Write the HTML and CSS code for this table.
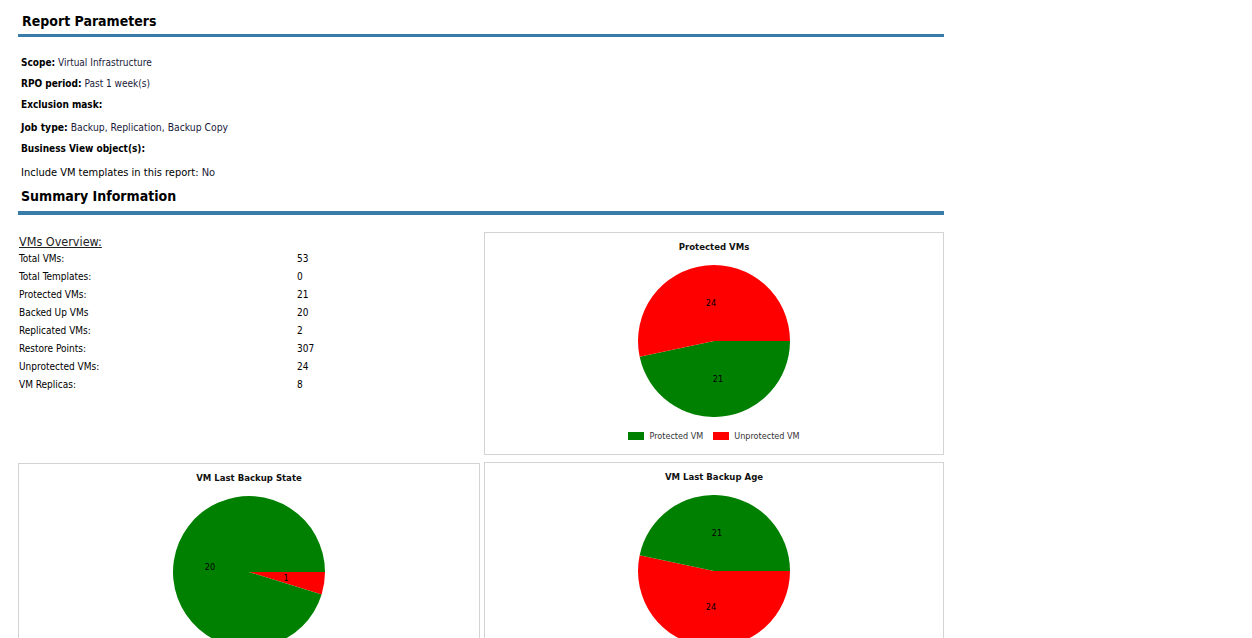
FILE: index.html
```html
<!DOCTYPE html>
<html>
<head>
<meta charset="utf-8">
<link rel="stylesheet" href="styles.css">
</head>
<body>
<div class="report">
  <div class="section-head">Report Parameters</div>
  <div class="params">
    <div class="param"><b>Scope:</b> <span class="val">Virtual Infrastructure</span></div>
    <div class="param"><b>RPO period:</b> <span class="val">Past 1 week(s)</span></div>
    <div class="param"><b>Exclusion mask:</b></div>
    <div class="param job"><b>Job type:</b> <span class="val">Backup, Replication, Backup Copy</span></div>
    <div class="param"><b>Business View object(s):</b></div>
    <div class="param incl">Include VM templates in this report: <span class="val">No</span></div>
  </div>
  <div class="section-head summary">Summary Information</div>

  <div class="grid">
    <div class="overview">
      <div class="ov-title">VMs Overview:</div>
      <div class="ov-rows">
        <span>Total VMs:</span><span>53</span>
        <span>Total Templates:</span><span>0</span>
        <span>Protected VMs:</span><span>21</span>
        <span>Backed Up VMs</span><span>20</span>
        <span>Replicated VMs:</span><span>2</span>
        <span>Restore Points:</span><span>307</span>
        <span>Unprotected VMs:</span><span>24</span>
        <span>VM Replicas:</span><span>8</span>
      </div>
    </div>

    <div class="chart">
      <div class="chart-title">Protected VMs</div>
      <svg class="pie" viewBox="-76 -76 152 152" width="152" height="152">
        <path d="M0,0 L76,0 A76,76 0 0,1 -74.34,15.80 Z" fill="#008000"/>
        <path d="M0,0 L-74.34,15.80 A76,76 0 1,1 76,0 Z" fill="#ff0000"/>
        <text x="-3" y="-38">24</text>
        <text x="4" y="38">21</text>
      </svg>
      <div class="legend">
        <span class="key"><i class="sw green"></i>Protected VM</span>
        <span class="key"><i class="sw red"></i>Unprotected VM</span>
      </div>
    </div>

    <div class="chart low">
      <div class="chart-title">VM Last Backup State</div>
      <svg class="pie" viewBox="-76 -76 152 152" width="152" height="152">
        <path d="M0,0 L76,0 A76,76 0 0,1 72.63,22.40 Z" fill="#ff0000"/>
        <path d="M0,0 L72.63,22.40 A76,76 0 1,1 76,0 Z" fill="#008000"/>
        <text x="-39" y="-5">20</text>
        <text x="37" y="6">1</text>
      </svg>
    </div>

    <div class="chart">
      <div class="chart-title">VM Last Backup Age</div>
      <svg class="pie" viewBox="-76 -76 152 152" width="152" height="152">
        <path d="M0,0 L76,0 A76,76 0 1,1 -74.34,-15.80 Z" fill="#ff0000"/>
        <path d="M0,0 L-74.34,-15.80 A76,76 0 0,1 76,0 Z" fill="#008000"/>
        <text x="3" y="-38">21</text>
        <text x="-3" y="36">24</text>
      </svg>
    </div>
  </div>
</div>
</body>
</html>
```

FILE: styles.css
```css
html, body {
  margin: 0;
  padding: 0;
  background: #ffffff;
}

body {
  font-family: "DejaVu Sans Condensed", "DejaVu Sans", sans-serif;
  color: #000;
  font-size: 11px;
}

.report {
  width: 926px;
  margin-left: 18px;
}

.section-head {
  font-size: 14px;
  font-weight: bold;
  line-height: 18px;
  padding: 12px 0 4px 4px;
  border-bottom: 3px solid #3a7ca8;
}

.section-head.summary {
  padding: 0 0 6px 3px;
  border-bottom-width: 4px;
}

.params {
  padding: 15px 0 4px 3px;
  display: flex;
  flex-direction: column;
}

.param {
  height: 21px;
  line-height: 21px;
  font-size: 10px;
}

.param.job {
  font-size: 10.3px;
  margin-top: 2px;
}

.param.incl {
  font-size: 11px;
  margin-top: 3px;
}

.param .val {
  color: #1a1a3a;
}

.grid {
  display: grid;
  grid-template-columns: 462px 460px;
  column-gap: 4px;
  row-gap: 7px;
  margin-top: 17px;
}

.overview {
  padding-top: 2px;
}

.ov-title {
  font-family: "DejaVu Sans Condensed", "DejaVu Sans", sans-serif;
  font-size: 12.5px;
  text-decoration: underline;
  color: #222;
  line-height: 16px;
  margin-left: 1px;
}

.ov-rows {
  display: grid;
  grid-template-columns: 278px auto;
  grid-auto-rows: 18px;
  line-height: 18px;
  font-size: 10px;
  margin-left: 1px;
}

.chart {
  border: 1px solid #d3d3d3;
  height: 221px;
  display: flex;
  flex-direction: column;
  align-items: center;
}

.chart.low {
  margin-top: 1px;
}

.chart-title {
  font-size: 9.5px;
  font-weight: bold;
  line-height: 14px;
  padding-top: 7px;
  margin-bottom: 11px;
  color: #111;
}

.pie {
  display: block;
}

.pie text {
  font-family: "DejaVu Sans Condensed", "DejaVu Sans", sans-serif;
  font-size: 9px;
  text-anchor: middle;
  dominant-baseline: middle;
  fill: #000;
}

.legend {
  display: flex;
  gap: 10px;
  margin-top: 14px;
  font-size: 9px;
  color: #333;
  line-height: 10px;
}

.key {
  display: flex;
  align-items: center;
}

.sw {
  display: inline-block;
  width: 16px;
  height: 8px;
  margin-right: 5px;
}

.sw.green { background: #008000; }
.sw.red { background: #ff0000; }
```
